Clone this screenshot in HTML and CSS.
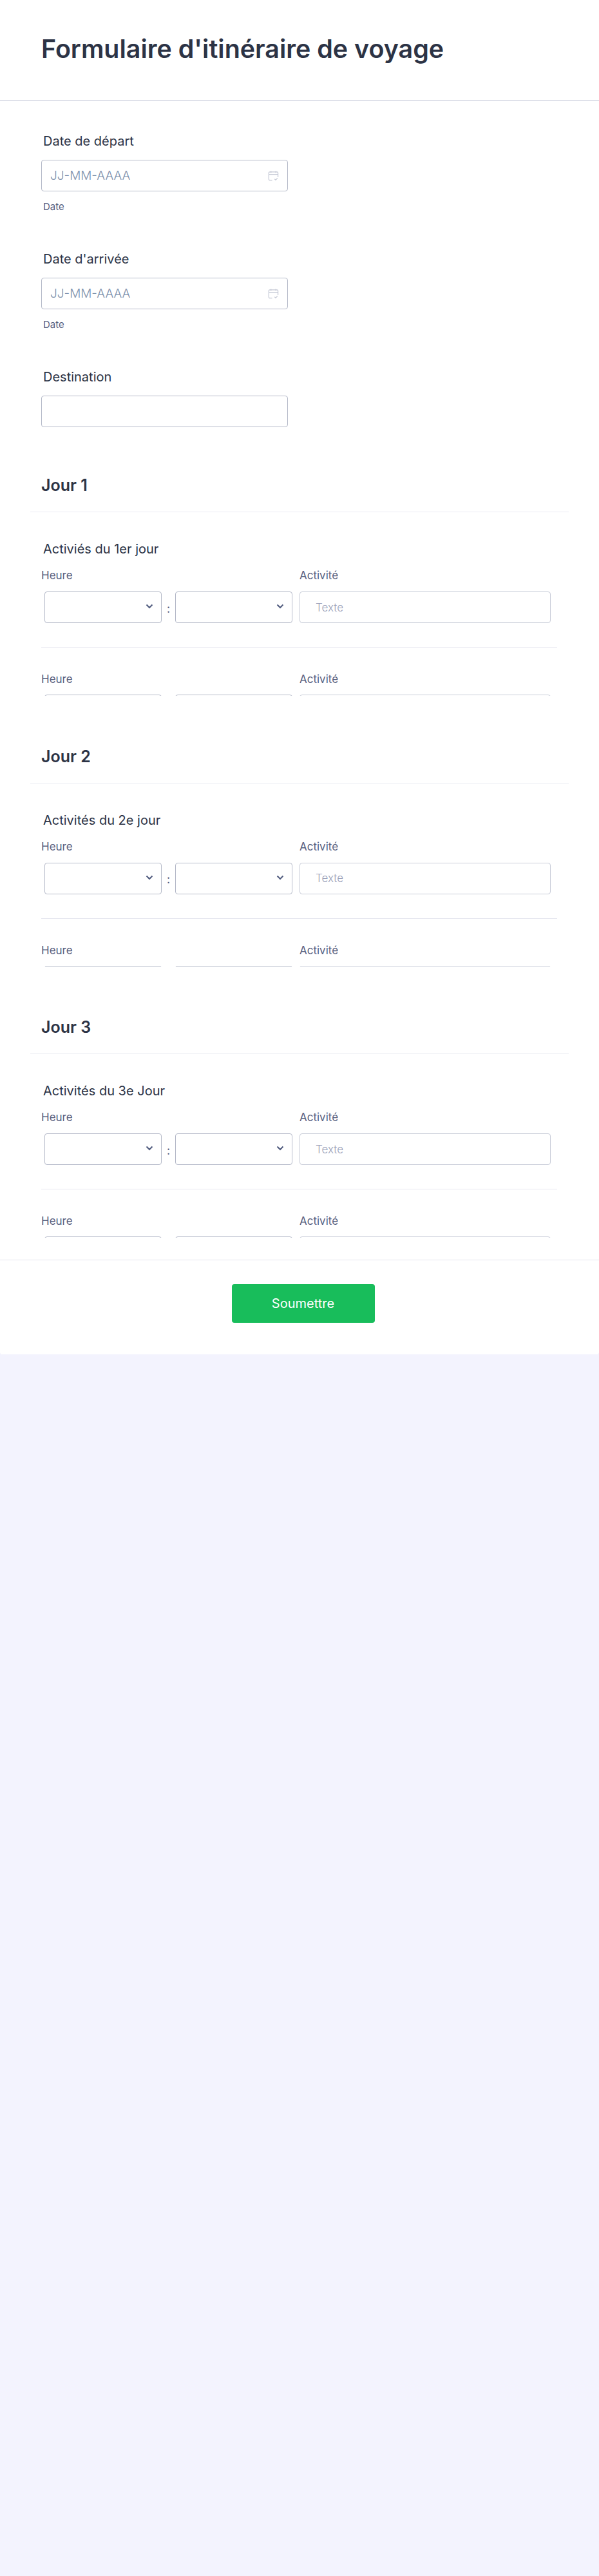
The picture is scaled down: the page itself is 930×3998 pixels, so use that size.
FILE: index.html
```html
<!DOCTYPE html>
<html lang="fr">
<head>
    <meta charset="UTF-8">
    <meta name="viewport" content="width=device-width, initial-scale=1.0">
    <title>Formulaire d'itinéraire de voyage</title>
    <link rel="stylesheet" href="styles.css">
</head>
<body>
<form class="form">
    <header class="form-header">
        <h1>Formulaire d'itinéraire de voyage</h1>
    </header>

    <div class="field first">
        <label class="field-label">Date de départ</label>
        <div class="date-box">
            <input type="text" class="text-input" placeholder="JJ-MM-AAAA">
            <svg class="cal-icon" width="17" height="18" viewBox="0 0 18 18" fill="none" stroke="#c3c7d4" stroke-width="1.3"><path d="M7 16H3a1.5 1.5 0 0 1-1.5-1.5V4A1.5 1.5 0 0 1 3 2.500h12A1.500 1.500 0 0 1 16.500 4v7M1.500 6.500h15M5 1v3M13 1v3M11 14l1.700 1.700 3-3.200"/></svg>
        </div>
        <div class="sublabel">Date</div>
    </div>

    <div class="field">
        <label class="field-label">Date d'arrivée</label>
        <div class="date-box">
            <input type="text" class="text-input" placeholder="JJ-MM-AAAA">
            <svg class="cal-icon" width="17" height="18" viewBox="0 0 18 18" fill="none" stroke="#c3c7d4" stroke-width="1.3"><path d="M7 16H3a1.5 1.5 0 0 1-1.5-1.5V4A1.5 1.5 0 0 1 3 2.500h12A1.500 1.500 0 0 1 16.500 4v7M1.500 6.500h15M5 1v3M13 1v3M11 14l1.700 1.700 3-3.200"/></svg>
        </div>
        <div class="sublabel">Date</div>
    </div>

    <div class="field">
        <label class="field-label">Destination</label>
        <div class="date-box">
            <input type="text" class="text-input">
        </div>
    </div>

    <section class="day">
        <h2>Jour 1</h2>
        <div class="day-body">
            <label class="field-label">Activiés du 1er jour</label>
            <div class="grid-head"><span>Heure</span><span>Activité</span></div>
            <div class="grid-row">
                <div class="select-box"><select></select><svg class="chevron" width="12" height="8" viewBox="0 0 12 8" fill="none" stroke="#4f5a7d" stroke-width="2"><path d="M1.500 1.500 6 6l4.500-4.500"/></svg></div>
                <span class="colon">:</span>
                <div class="select-box"><select></select><svg class="chevron" width="12" height="8" viewBox="0 0 12 8" fill="none" stroke="#4f5a7d" stroke-width="2"><path d="M1.500 1.500 6 6l4.500-4.500"/></svg></div>
                <input type="text" class="activity" placeholder="Texte">
            </div>
            <div class="grid-line"></div>
            <div class="grid-head second"><span>Heure</span><span>Activité</span></div>
            <div class="grid-clip">
                <div class="clip-box hour"></div>
                <div class="clip-box hour"></div>
                <div class="clip-box act"></div>
            </div>
        </div>
    </section>

    <section class="day">
        <h2>Jour 2</h2>
        <div class="day-body">
            <label class="field-label">Activités du 2e jour</label>
            <div class="grid-head"><span>Heure</span><span>Activité</span></div>
            <div class="grid-row">
                <div class="select-box"><select></select><svg class="chevron" width="12" height="8" viewBox="0 0 12 8" fill="none" stroke="#4f5a7d" stroke-width="2"><path d="M1.500 1.500 6 6l4.500-4.500"/></svg></div>
                <span class="colon">:</span>
                <div class="select-box"><select></select><svg class="chevron" width="12" height="8" viewBox="0 0 12 8" fill="none" stroke="#4f5a7d" stroke-width="2"><path d="M1.500 1.500 6 6l4.500-4.500"/></svg></div>
                <input type="text" class="activity" placeholder="Texte">
            </div>
            <div class="grid-line"></div>
            <div class="grid-head second"><span>Heure</span><span>Activité</span></div>
            <div class="grid-clip">
                <div class="clip-box hour"></div>
                <div class="clip-box hour"></div>
                <div class="clip-box act"></div>
            </div>
        </div>
    </section>

    <section class="day">
        <h2>Jour 3</h2>
        <div class="day-body">
            <label class="field-label">Activités du 3e Jour</label>
            <div class="grid-head"><span>Heure</span><span>Activité</span></div>
            <div class="grid-row">
                <div class="select-box"><select></select><svg class="chevron" width="12" height="8" viewBox="0 0 12 8" fill="none" stroke="#4f5a7d" stroke-width="2"><path d="M1.500 1.500 6 6l4.500-4.500"/></svg></div>
                <span class="colon">:</span>
                <div class="select-box"><select></select><svg class="chevron" width="12" height="8" viewBox="0 0 12 8" fill="none" stroke="#4f5a7d" stroke-width="2"><path d="M1.500 1.500 6 6l4.500-4.500"/></svg></div>
                <input type="text" class="activity" placeholder="Texte">
            </div>
            <div class="grid-line"></div>
            <div class="grid-head second"><span>Heure</span><span>Activité</span></div>
            <div class="grid-clip">
                <div class="clip-box hour"></div>
                <div class="clip-box hour"></div>
                <div class="clip-box act"></div>
            </div>
        </div>
    </section>

    <div class="submit-bar">
        <button type="button" class="submit">Soumettre</button>
    </div>
</form>
</body>
</html>
```

FILE: styles.css
```css
* {
    box-sizing: border-box;
}

body {
    margin: 0;
    min-height: 100vh;
    background-color: #f3f3fe;
    font-family: Inter, "Noto Sans", sans-serif;
    color: #2c3345;
}

.form {
    background: #fff;
    height: 2102px;
    border-radius: 0 0 4px 4px;
}

.form-header {
    height: 157px;
    padding: 52px 64px 0;
    border-bottom: 2px solid #dfe1ea;
}

.form-header h1 {
    margin: 0;
    font-size: 39.4px;
    line-height: 48px;
    font-weight: 600;
}

.field {
    padding: 61px 64px 0;
}

.field.first {
    padding-top: 51px;
}

.field-label {
    display: block;
    padding-left: 3px;
    font-size: 20px;
    line-height: 22px;
    font-weight: 400;
}

.date-box {
    position: relative;
    width: 383px;
    margin-top: 18px;
}

.text-input {
    display: block;
    width: 100%;
    height: 49px;
    padding: 0 13px;
    border: 1px solid #b4b9c8;
    border-radius: 4px;
    background: #fff;
    font-family: inherit;
    font-size: 19px;
    font-weight: 300;
}

.text-input::placeholder {
    color: #7f93ad;
    opacity: 1;
}

.cal-icon {
    position: absolute;
    top: 16px;
    right: 14px;
}

.sublabel {
    margin-top: 15px;
    padding-left: 3px;
    font-size: 15px;
    line-height: 18px;
    color: #57607f;
}

.day h2 {
    width: 836px;
    margin: 0 0 0 47px;
    padding: 79.5px 0 26px 17px;
    font-size: 25px;
    line-height: 29px;
    font-weight: 600;
    border-bottom: 1px solid #ebecf3;
}

.field + .day h2 {
    padding-top: 76px;
}

.day-body {
    padding: 46px 64px 0;
}

.grid-head {
    display: flex;
    width: 801px;
    margin-top: 19px;
    font-size: 17px;
    line-height: 22px;
    color: #57607f;
}

.grid-head span:first-child {
    width: 401px;
}

.grid-row {
    display: flex;
    align-items: center;
    margin-top: 14px;
    padding-left: 5px;
}

.select-box {
    position: relative;
    width: 182px;
    height: 49px;
}

.select-box select {
    display: block;
    appearance: none;
    width: 100%;
    height: 100%;
    border: 1px solid #b4b9c8;
    border-radius: 4px;
    background: #fff;
}

.chevron {
    position: absolute;
    top: 19px;
    right: 13px;
}

.colon {
    width: 21px;
    text-align: center;
    font-size: 18px;
    line-height: 22px;
    padding-top: 4px;
    color: #4f5a7d;
}

.activity {
    width: 390px;
    height: 49px;
    margin-left: 11px;
    padding: 0 24px;
    border: 1px solid #c8ccd8;
    border-radius: 4px;
    font-family: inherit;
    font-size: 17px;
    font-weight: 300;
    background: #fff;
}

.activity::placeholder {
    color: #9a9fb8;
    opacity: 1;
}

.grid-line {
    width: 801px;
    height: 1px;
    margin-top: 37px;
    background: #e6e7f0;
}

.grid-head.second {
    margin-top: 38px;
}

.grid-clip {
    display: flex;
    height: 2px;
    margin-top: 13px;
    padding-left: 5px;
    overflow: hidden;
}

.clip-box {
    height: 49px;
    border: 1px solid #b4b9c8;
    border-radius: 4px;
}

.clip-box.hour {
    width: 182px;
    margin-right: 21px;
}

.clip-box.act {
    width: 390px;
    margin-left: -10px;
    border-color: #c8ccd8;
}

.submit-bar {
    display: flex;
    justify-content: center;
    margin-top: 34px;
    padding: 37px 0 0 11px;
    border-top: 1px solid #e3e4ec;
}

.submit {
    width: 222px;
    height: 60px;
    border: none;
    border-radius: 4px;
    background: #18bd5b;
    color: #fff;
    font-family: inherit;
    font-size: 20px;
    font-weight: 400;
}
```
